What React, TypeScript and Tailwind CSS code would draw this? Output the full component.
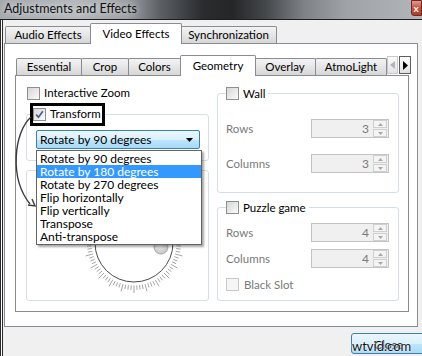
import React from "react";

function Checkbox({ checked = false, disabled = false }: { checked?: boolean; disabled?: boolean }) {
  return (
    <div
      className={
        disabled
          ? "w-[13px] h-[13px] border border-[#c8c8c8] bg-[#f6f6f6] shrink-0 flex items-center justify-center"
          : "w-[13px] h-[13px] border border-[#8e8f8f] bg-[linear-gradient(135deg,#d6d6d6,#fbfbfb)] shrink-0 flex items-center justify-center"
      }
    >
      {checked && (
        <svg width="9" height="9" viewBox="0 0 9 9">
          <path d="M1.2 4.6 L3.5 7.2 L7.8 1.2" stroke="#4a5d8c" strokeWidth="1.7" fill="none" />
        </svg>
      )}
    </div>
  );
}

function OuterTab({ label, w, selected = false }: { label: string; w: number; selected?: boolean }) {
  return (
    <div
      style={{ width: w }}
      className={
        selected
          ? "h-[21px] -mb-px -mx-px relative z-10 bg-white border border-b-0 border-[#898c95] rounded-t-[2px] flex items-center justify-center text-[11.5px] text-black pb-[1px]"
          : "h-[17px] bg-[linear-gradient(#f3f3f3,#e6e6e6_50%,#d6d6d6)] border border-b-0 border-[#898c95] rounded-t-[2px] flex items-center justify-center text-[11.5px] text-black -ml-px first:ml-0"
      }
    >
      {label}
    </div>
  );
}

function Spin({ value }: { value: string }) {
  return (
    <div className="w-[78px] h-[19px] border border-[#c3c3c3] bg-[#f0f0f0] flex items-center">
      <div className="flex-1 text-right pr-[4px] text-[12px] text-[#7a7a7a]">{value}</div>
      <div className="w-[15px] h-[17px] flex flex-col gap-[1px] pr-[1px]">
        <div className="flex-1 border border-[#cfcfcf] bg-[#f4f4f4] flex items-center justify-center">
          <svg width="5" height="3" viewBox="0 0 5 3"><path d="M0 3 L2.5 0 L5 3Z" fill="#a8a8a8" /></svg>
        </div>
        <div className="flex-1 border border-[#cfcfcf] bg-[#f4f4f4] flex items-center justify-center">
          <svg width="5" height="3" viewBox="0 0 5 3"><path d="M0 0 L2.5 3 L5 0Z" fill="#a8a8a8" /></svg>
        </div>
      </div>
    </div>
  );
}

function Dial() {
  const ticks = [] as React.ReactNode[];
  const n = 96;
  for (let i = 0; i < n; i++) {
    const a = (i / n) * Math.PI * 2;
    const long = i % 4 === 0;
    const r1 = 42.5;
    const r2 = long ? 50 : 47;
    ticks.push(
      <line
        key={i}
        x1={55 + Math.cos(a) * r1}
        y1={55 + Math.sin(a) * r1}
        x2={55 + Math.cos(a) * r2}
        y2={55 + Math.sin(a) * r2}
        stroke="#9a9a9a"
        strokeWidth="0.9"
      />
    );
  }
  return (
    <svg width="110" height="110" viewBox="0 0 110 110">
      {ticks}
      <circle cx="55" cy="55" r="39" fill="#ffffff" stroke="#4a4a4a" strokeWidth="1" />
      <defs>
        <radialGradient id="kn" cx="0.4" cy="0.35" r="0.7">
          <stop offset="0" stopColor="#eeeeee" />
          <stop offset="1" stopColor="#c4c4c4" />
        </radialGradient>
      </defs>
      <circle cx="82" cy="59" r="7" fill="url(#kn)" stroke="#a8a8a8" strokeWidth="1" />
    </svg>
  );
}

export default function App() {
  const items = [
    "Rotate by 90 degrees",
    "Rotate by 180 degrees",
    "Rotate by 270 degrees",
    "Flip horizontally",
    "Flip vertically",
    "Transpose",
    "Anti-transpose",
  ];
  return (
    <div className="relative w-[422px] h-[356px] overflow-hidden bg-[#f0f0f0] font-['Lato','Noto_Sans',sans-serif] text-black">
      {/* title bar */}
      <div className="h-[19px] flex items-center bg-[linear-gradient(90deg,#a4a9ae_0%,#b4b8bc_18%,#9ca0a4_30%,#5c6064_38%,#2a2c2f_48%,#242628_55%,#45484b_63%,#7e8286_72%,#9fa3a7_82%,#b2b6ba_100%)]">
        <div className="pl-[4px] text-[12.5px] text-[#111] [text-shadow:0_0_6px_rgba(255,255,255,0.9)] leading-none">
          Adjustments and Effects
        </div>
        <div className="ml-auto w-[11px] h-[16px] self-start bg-[linear-gradient(#e29a8c,#c7503c_50%,#b43a28)] border border-[#6e2a20] rounded-bl-[3px] flex items-center justify-center text-white text-[10px] font-bold leading-none pr-[1px]">
          x
        </div>
      </div>

      {/* client */}
      <div className="flex border-t border-[#1e1e1e] h-[337px]">
        <div className="w-[3px] border-l border-r border-[#2a2a2a] bg-white shrink-0" />
        <div className="flex-1 flex flex-col">
          {/* outer tabs */}
          <div className="h-[23px] flex items-end pl-[2px]">
            <OuterTab label="Audio Effects" w={86} />
            <OuterTab label="Video Effects" w={92} selected />
            <OuterTab label="Synchronization" w={97} />
          </div>
          <div className="ml-[1px] w-[414px] h-[284px] bg-white border border-[#898c95] pt-[10px] pl-[10px]">
            {/* inner tabs */}
            <div className="h-[21px] flex items-end pl-[1px]">
              <OuterTab label="Essential" w={66} />
              <OuterTab label="Crop" w={48} />
              <OuterTab label="Colors" w={53} />
              <OuterTab label="Geometry" w={76} selected />
              <OuterTab label="Overlay" w={62} />
              <OuterTab label="AtmoLight" w={72} />
              <div className="mb-[1px] flex gap-[1px] self-end">
                <div className="w-[11px] h-[18px] border border-[#c9c9c9] bg-[linear-gradient(#fafafa,#e4e4e4)] flex items-center justify-center">
                  <svg width="5" height="8" viewBox="0 0 5 8"><path d="M5 0 L0 4 L5 8Z" fill="#b4b4b4" /></svg>
                </div>
                <div className="w-[12px] h-[18px] border border-[#5e5e5e] bg-[linear-gradient(#ffffff,#e2e2e2)] flex items-center justify-center">
                  <svg width="5" height="9" viewBox="0 0 5 9"><path d="M0 0 L5 4.5 L0 9Z" fill="#000" /></svg>
                </div>
              </div>
            </div>
            <div className="w-[394px] h-[237px] border border-[#898c95] bg-white pt-[10px] pl-[10px] flex gap-[8px]">
              {/* left column */}
              <div className="w-[183px] flex flex-col">
                <div className="h-[14px] flex items-center pl-[1px] gap-[4px]">
                  <Checkbox />
                  <span className="text-[11.5px]">Interactive Zoom</span>
                </div>
                <div className="mt-[14px] h-[47px] border border-[#d5dfe5] rounded-[3px]">
                  <div className="-mt-[8px] ml-[6px] h-[14px] w-fit flex items-center gap-[4px] bg-white pr-[2px]">
                    <Checkbox checked />
                    <span className="text-[11.5px]">Transform</span>
                  </div>
                  <div className="mt-[9px] ml-[9px] w-[164px] h-[19px] border border-[#3c7fb1] rounded-[2px] bg-[linear-gradient(#eaf6fd,#d9f0fc_50%,#bee6fd_51%,#a7d9f5)] flex items-center pl-[3px] pr-[6px] text-[12px]">
                    <span>Rotate by 90 degrees</span>
                    <svg className="ml-auto" width="7" height="4" viewBox="0 0 7 4"><path d="M0 0 L7 0 L3.5 4Z" fill="#000" /></svg>
                  </div>
                </div>
                <div className="mt-[9px] h-[131px] border border-[#d5dfe5] rounded-[3px] flex">
                  <div className="w-[52px] pl-[11px] pt-[59px] text-[11.5px] text-[#8a8a8a]">Angle</div>
                  <div className="pt-[17px]">
                    <Dial />
                  </div>
                </div>
              </div>

              {/* right column */}
              <div className="w-[182px] flex flex-col">
                <div className="mt-[7px] h-[100px] border border-[#d5dfe5] rounded-[3px] pl-[8px] pr-[9px]">
                  <div className="-mt-[7px] h-[13px] w-fit flex items-center gap-[4px] bg-white pr-[3px]">
                    <Checkbox />
                    <span className="text-[11.5px]">Wall</span>
                  </div>
                  <div className="mt-[19px] h-[19px] flex items-center justify-between">
                    <span className="text-[11.5px] text-[#7a7a7a]">Rows</span>
                    <Spin value="3" />
                  </div>
                  <div className="mt-[16px] h-[19px] flex items-center justify-between">
                    <span className="text-[11.5px] text-[#7a7a7a]">Columns</span>
                    <Spin value="3" />
                  </div>
                </div>
                <div className="mt-[14px] h-[94px] border border-[#d5dfe5] rounded-[3px] pl-[8px] pr-[9px]">
                  <div className="-mt-[7px] h-[13px] w-fit flex items-center gap-[4px] bg-white pr-[3px]">
                    <Checkbox />
                    <span className="text-[11.5px]">Puzzle game</span>
                  </div>
                  <div className="mt-[9px] h-[19px] flex items-center justify-between">
                    <span className="text-[11.5px] text-[#7a7a7a]">Rows</span>
                    <Spin value="4" />
                  </div>
                  <div className="mt-[7px] h-[19px] flex items-center justify-between">
                    <span className="text-[11.5px] text-[#7a7a7a]">Columns</span>
                    <Spin value="4" />
                  </div>
                  <div className="mt-[10px] h-[13px] flex items-center gap-[5px]">
                    <Checkbox disabled />
                    <span className="text-[11.5px] text-[#7a7a7a]">Black Slot</span>
                  </div>
                </div>
              </div>
            </div>
          </div>
          {/* footer */}
          <div className="flex-1 flex justify-start pl-[348px] pt-[6px]">
            <div className="w-[80px] h-[21px] border border-[#3c7fb1] rounded-[3px] bg-[linear-gradient(#eaf6fd,#d9f0fc_50%,#bee6fd_51%,#a7d9f5)] flex items-start pt-[2px] pl-[22px] text-[12px] shrink-0">
              Close
            </div>
          </div>
        </div>
      </div>

      {/* black highlight around Transform */}
      <div className="absolute left-[30px] top-[103px] w-[75px] h-[23px] border-[3px] border-black pointer-events-none" />

      {/* curved arrow */}
      <svg className="absolute left-0 top-0 pointer-events-none" width="60" height="230" viewBox="0 0 60 230">
        <path d="M31 117 C 14 132, 9 178, 30 204" stroke="#3a3a3a" strokeWidth="1.4" fill="none" />
        <path d="M28 205 L35 206 L32 199" stroke="#3a3a3a" strokeWidth="1.4" fill="none" />
      </svg>

      {/* dropdown popup */}
      <div className="absolute left-[36px] top-[150px] w-[166px] border border-[#646464] bg-white py-[1px] shadow-[2px_2px_2px_rgba(0,0,0,0.35)]">
        {items.map((t, i) => (
          <div
            key={t}
            className={
              i === 1
                ? "h-[13px] leading-[13px] pl-[3px] text-[12px] bg-[#3399ff] text-white"
                : "h-[13px] leading-[13px] pl-[3px] text-[12px] text-black"
            }
          >
            {t}
          </div>
        ))}
      </div>

      {/* watermark */}
      <div className="absolute left-[352px] top-[340px] text-[13px] leading-none text-[#111] [text-shadow:0_0_2px_#fff,0_0_2px_#fff]">
        wtvid.com
      </div>
    </div>
  );
}
